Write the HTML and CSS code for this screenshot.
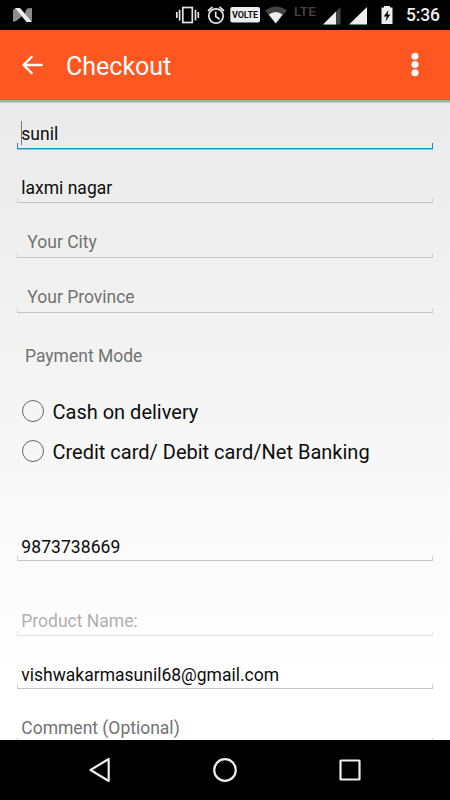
FILE: index.html
```html
<!DOCTYPE html>
<html lang="en">
<head>
<meta charset="utf-8">
<title>Checkout</title>
<link rel="stylesheet" href="styles.css">
</head>
<body>
<div class="screen">
  <header class="status">
    <svg class="status-icons" width="400" height="30" viewBox="0 0 400 30" aria-hidden="true">
      <path fill="#8d8d8d" d="M13 10l3-2 6 8-5 4.500-4 1.500zM27 8.500l5-.5v12l-2 2-6-7z"/>
      <path fill="#eee" d="M15 8h5l12 14h-5.500z"/>
      <g fill="none" stroke="#e4e4e4" stroke-width="1.700">
        <rect x="182.800" y="7.500" width="9.500" height="15"/>
        <path d="M179.600 9.800v10.700M176.800 12v6M195.500 9.800v10.700M198.300 12v6"/>
        <circle cx="216" cy="16" r="7.200"/>
        <path d="M215.700 11.500v5l4 2.700M208 11l4.500-4M224 11l-4.500-4"/>
      </g>
      <rect x="230.300" y="7" width="29.700" height="15.500" rx="2" fill="#eee"/>
      <path fill="#444" d="M265 10.500Q276 2.500 287 10.500L275.800 23.500z"/>
      <path fill="#eee" d="M268.700 14.500Q276 9.500 282.500 14.500L275.800 23.500z"/>
      <path fill="#444" d="M340.500 7v17.500h-17z"/>
      <path fill="#eee" d="M336 11.500v13h-13zM367 7v17.500h-18z"/>
      <path fill="#eee" d="M384 6h6v1.500h2.500V24h-11V7.500h2.500z"/>
      <path fill="#000" d="M388.500 10l-4.800 6.500h3l-1.200 5 4.800-7h-2.800z"/>
    </svg>
    <span class="volte">VOLTE</span>
    <span class="lte">LTE</span>
    <time class="clock">5:36</time>
  </header>
  <div class="toolbar">
    <svg class="back" width="22" height="20" viewBox="0 0 22 20" fill="none" stroke="#fff" stroke-width="2.300" aria-label="Back"><path d="M1.800 10H20.500M10.300 1.300L1.600 10l8.700 8.700"/></svg>
    <h1 class="title">Checkout</h1>
    <svg class="more" width="8" height="26" viewBox="0 0 8 26" fill="#fff" aria-label="More"><circle cx="4" cy="4.300" r="3.500"/><circle cx="4" cy="12.500" r="3.500"/><circle cx="4" cy="20.700" r="3.500"/></svg>
  </div>
  <main class="form">
    <div class="field name active"><i class="caret"></i><span>sunil</span></div>
    <div class="field address"><span>laxmi nagar</span></div>
    <div class="field city hint"><span>Your City</span></div>
    <div class="field province hint"><span>Your Province</span></div>
    <div class="label">Payment Mode</div>
    <div class="option"><i class="radio"></i><span>Cash on delivery</span></div>
    <div class="option"><i class="radio"></i><span>Credit card/ Debit card/Net Banking</span></div>
    <div class="field phone"><span>9873738669</span></div>
    <div class="field product disabled"><span>Product Name:</span></div>
    <div class="field email"><span>vishwakarmasunil68@gmail.com</span></div>
    <div class="field comment hint"><span>Comment (Optional)</span></div>
  </main>
  <nav class="navbar">
    <svg width="24" height="28" viewBox="0 0 24 28"><path d="M20.700 3v22L2.500 14z"/></svg>
    <svg width="28" height="28" viewBox="0 0 28 28"><circle cx="14" cy="14" r="10.800"/></svg>
    <svg width="24" height="28" viewBox="0 0 24 28"><rect x="2.500" y="4.500" width="19" height="19" rx=".5"/></svg>
  </nav>
</div>
</body>
</html>
```
FILE: styles.css
```css
* { box-sizing: border-box; }
body { margin: 0; font-family: Roboto, sans-serif; }
.screen {
  width: 450px;
  height: 800px;
  overflow: hidden;
  display: flex;
  flex-direction: column;
}
.status {
  position: relative;
  flex: none;
  height: 30px;
  background: #000;
  color: #eee;
}
.status-icons { display: block; }
.volte, .lte, .clock { position: absolute; white-space: nowrap; }
.volte { left: 232px; top: 8px; font-size: 9px; line-height: 14px; font-weight: 700; letter-spacing: -.1px; color: #111; }
.lte { left: 294px; top: 4px; font-size: 13.500px; line-height: 15px; font-weight: 500; letter-spacing: .2px; color: #444; }
.clock { left: 406px; top: 5px; font-size: 17.500px; line-height: 21px; font-weight: 500; letter-spacing: -.2px; }
.toolbar {
  position: relative;
  z-index: 1;
  flex: none;
  display: flex;
  align-items: center;
  height: 70px;
  padding: 0 31.500px 0 22px;
  background: #ff5722;
  box-shadow: 0 1px 0 #9eafae, 0 2px 0 #aaa7a6, 0 3px 1px #ccc;
}
.title {
  margin: 4px auto 0 22px;
  font-size: 25px;
  line-height: 32px;
  font-weight: 400;
  color: #fff;
}
.form {
  flex: none;
  height: 640px;
  overflow: hidden;
  padding: 0 17px;
  background: linear-gradient(#eaeaea, #fff 90%);
  color: #0c0c0c;
  font-size: 17.500px;
}
.field {
  --line: #c4c4c4;
  --tick: #d2d2d2;
  position: relative;
  display: flex;
  align-items: flex-end;
  height: 54px;
  padding: 0 0 3px 4.300px;
  line-height: 22px;
  border-bottom: 1px solid var(--line);
  white-space: nowrap;
}
.field::after {
  content: "";
  position: absolute;
  inset: auto 0 0;
  height: 4px;
  border: solid var(--tick);
  border-width: 0 1px;
}
.active {
  --line: #8cc4e0;
  --tick: #0d94d2;
  height: 50px;
  padding-bottom: 4px;
}
.active::after { border-bottom-width: 1px; height: 5px; }
.address { height: 53px; }
.city, .province { height: 55px; padding-left: 10.300px; padding-bottom: 4px; }
.hint { color: #727272; }
.disabled { --line: #e2e2e2; --tick: #e8e8e8; color: #b0b0b0; }
.caret {
  position: absolute;
  left: 4px;
  bottom: 4px;
  width: 1px;
  height: 24px;
  background: #777;
}
.label { height: 78px; padding: 32px 0 0 8px; line-height: 22px; color: #727272; }
.option {
  display: flex;
  align-items: center;
  gap: 9px;
  height: 40px;
  padding-left: 4.500px;
  font-size: 20px;
  line-height: 24px;
}
.option span { padding-top: 1px; }
.radio { width: 22px; height: 22px; border: 1px solid #666; border-radius: 50%; }
.phone { height: 90px; padding-bottom: 2px; letter-spacing: .08px; }
.product { height: 75px; padding-bottom: 3px; }
.email { height: 53px; padding-bottom: 2px; }
.comment { height: 54px; }
.navbar {
  flex: none;
  display: flex;
  align-items: center;
  justify-content: space-between;
  height: 60px;
  padding: 0 88px;
  background: #000;
}
.navbar svg { fill: none; stroke: #eee; stroke-width: 2.200; stroke-linejoin: round; }
```
